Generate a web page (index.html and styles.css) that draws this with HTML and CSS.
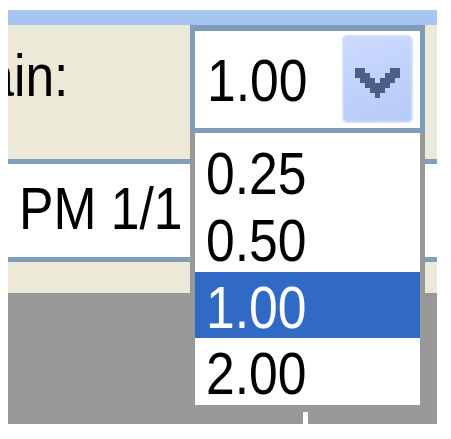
FILE: index.html
```html
<!DOCTYPE html>
<html>
<head>
<meta charset="utf-8">
<link rel="stylesheet" href="styles.css">
</head>
<body>
<div class="screen">
  <div class="band"></div>
  <div class="row-top">
    <div class="label"><span class="txt txt-r">Gain:</span></div>
  </div>
  <div class="row-field">
    <div class="field-text"><span class="txt">PM 1/1</span></div>
  </div>
  <div class="row-beige"></div>
  <div class="row-grey"></div>

  <div class="combo">
    <div class="combo-value"><span class="txt">1.00</span></div>
    <div class="combo-btn">
      <svg class="arrow" viewBox="0 0 9 6" width="45" height="30" shape-rendering="crispEdges">
        <rect x="0" y="0" width="2" height="1"/>
        <rect x="7" y="0" width="2" height="1"/>
        <rect x="0" y="1" width="3" height="1"/>
        <rect x="6" y="1" width="3" height="1"/>
        <rect x="1" y="2" width="3" height="1"/>
        <rect x="5" y="2" width="3" height="1"/>
        <rect x="2" y="3" width="5" height="1"/>
        <rect x="3" y="4" width="3" height="1"/>
        <rect x="4" y="5" width="1" height="1"/>
      </svg>
    </div>
  </div>

  <div class="list">
    <div class="item"><span class="txt">0.25</span></div>
    <div class="item"><span class="txt">0.50</span></div>
    <div class="item selected"><span class="txt">1.00</span></div>
    <div class="item"><span class="txt">2.00</span></div>
  </div>

  <div class="notch"></div>
</div>
</body>
</html>
```

FILE: styles.css
```css
html, body {
  margin: 0;
  padding: 0;
  background: #ffffff;
}

.screen {
  position: relative;
  margin: 10px 0 0 8px;
  width: 429px;
  height: 414px;
  display: flex;
  flex-direction: column;
  overflow: hidden;
  font-family: "Liberation Sans", Arial, sans-serif;
  font-size: 60px;
  line-height: 60px;
  color: #000;
}

.txt {
  display: inline-block;
  white-space: nowrap;
  transform: scaleX(0.86);
  transform-origin: left center;
}

.txt-r {
  transform-origin: right center;
}

.band {
  height: 15px;
  background: #a8c5f2;
}

.row-top {
  height: 134px;
  background: #ece9d8;
}

.label {
  width: 60px;
  display: flex;
  justify-content: flex-end;
  overflow: hidden;
  padding-top: 21px;
}

.row-field {
  height: 93px;
  background: #ffffff;
  border-top: 5px solid #819fbc;
  border-bottom: 5px solid #819fbc;
}

.field-text {
  padding: 15px 0 0 11px;
}

.row-beige {
  height: 31px;
  background: #ece9d8;
}

.row-grey {
  flex: 1;
  background: #989898;
}

.combo {
  position: absolute;
  left: 182px;
  top: 15px;
  width: 235px;
  height: 108px;
  box-sizing: border-box;
  border: 5px solid #7f9db9;
  border-top-width: 6px;
  background: #ffffff;
  display: flex;
  padding: 4px 7px 5px 12px;
}

.combo-value {
  flex: 1;
  padding-top: 16px;
}

.combo-btn {
  width: 71px;
  border-radius: 6px;
  background: linear-gradient(160deg, #cddbfd 0%, #bfd1fa 55%, #b6caf7 100%);
  box-shadow: inset 0 0 0 2px #d3e0fd;
  display: flex;
  align-items: center;
  justify-content: center;
  padding-top: 7px;
  box-sizing: border-box;
}

.arrow {
  display: block;
  fill: #4b5e86;
}

.list {
  position: absolute;
  left: 182px;
  top: 123px;
  width: 235px;
  box-sizing: border-box;
  background: #ffffff;
  border: 5px solid #989898;
  border-top: 0;
  padding-top: 5px;
}

.item {
  height: 66.75px;
  padding: 6px 0 0 11px;
  box-sizing: border-box;
}

.item.selected {
  background: #316ac5;
  color: #ffffff;
}

.notch {
  position: absolute;
  left: 295px;
  top: 402px;
  width: 5px;
  height: 12px;
  background: #ffffff;
}
```
